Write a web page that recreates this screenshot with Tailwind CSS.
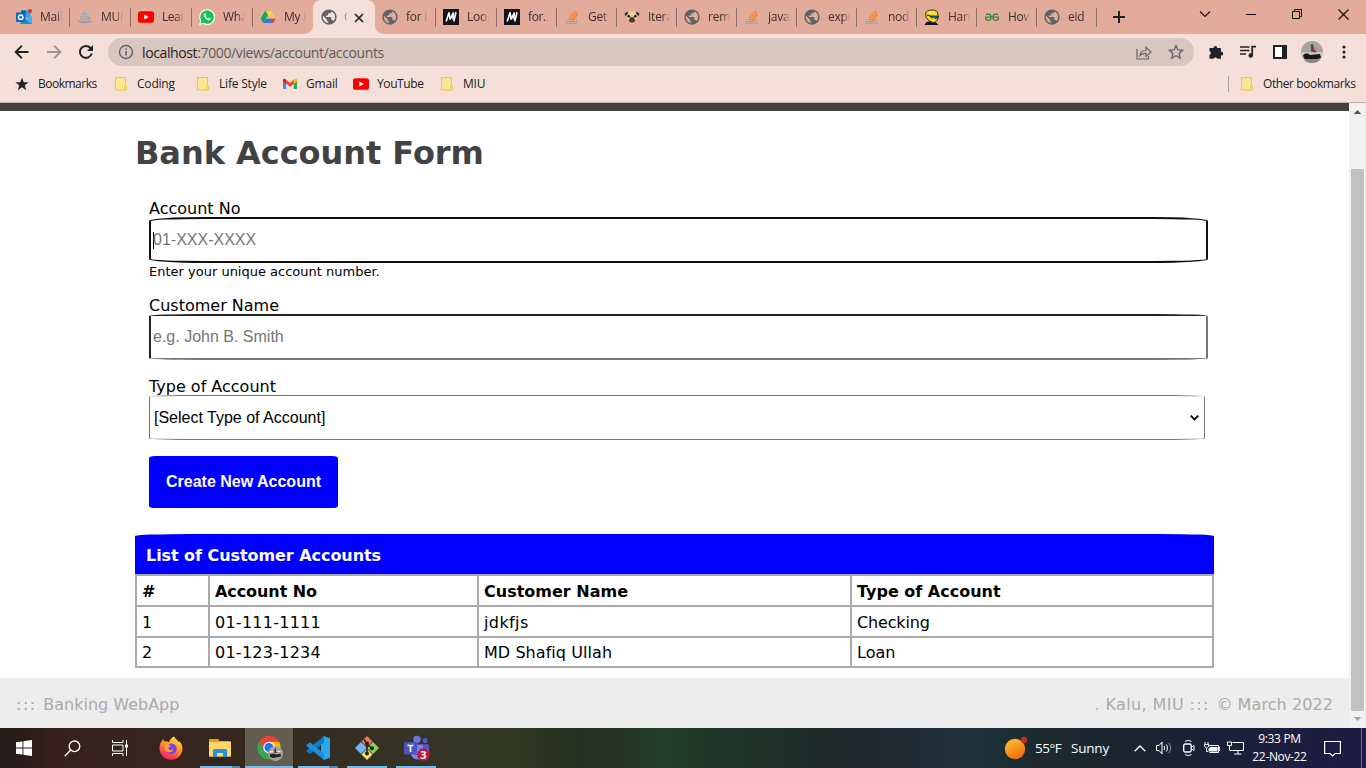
<!DOCTYPE html>
<html lang="en">
<head>
<meta charset="utf-8">
<title>Bank Account Form</title>
<script src="https://cdn.jsdelivr.net/npm/@tailwindcss/browser@4"></script>
</head>
<body class="w-[1366px] h-[768px] overflow-hidden bg-white flex flex-col font-['Open_Sans',sans-serif] text-[12px] text-[#202124]">
<svg class="hidden">
  <symbol id="globe" viewBox="1.500 1.500 21 21"><path d="M12 2C6.480 2 2 6.480 2 12s4.480 10 10 10 10-4.480 10-10S17.520 2 12 2zm-1 17.930c-3.950-.49-7-3.850-7-7.930 0-.62.080-1.210.210-1.790L9 15v1c0 1.100.9 2 2 2v1.930zm6.900-2.540c-.26-.81-1-1.390-1.900-1.390h-1v-3c0-.55-.45-1-1-1H8v-2h2c.55 0 1-.45 1-1V7h2c1.100 0 2-.9 2-2v-.41c2.930 1.190 5 4.060 5 7.410 0 2.080-.8 3.970-2.100 5.390z" fill="#5f6368"/></symbol>
  <symbol id="yt" viewBox="0 0 16 12"><rect width="16" height="11.500" y=".3" rx="2.600" fill="#f00"/><path d="M6.300 3.400v5.200L10.800 6z" fill="#fff"/></symbol>
  <symbol id="so" viewBox="0 0 16 16"><path d="M2.500 10v4.400h10V10" fill="none" stroke="#9fa6ad" stroke-width="1.200"/><path d="M4.300 12.500h6.500M4.400 10.200l6.400.7M5 7.700l6.200 1.900M6.400 5.200l5.500 3.100M8.500 3.200l4.400 4.500M11.200 1.700l2.500 5.200" stroke="#f48024" stroke-width="1.200" fill="none"/></symbol>
  <symbol id="mdn" viewBox="0 0 16 16"><path d="M0 0h16v16H0z" fill="#15141a"/><path d="M3.200 12.500L6 3.500l1.200 7L10.300 3.500l-.3 7M13 3.300l-2.200 9.200" fill="none" stroke="#fff" stroke-width="1.600" stroke-linejoin="bevel"/></symbol>
  <symbol id="folder" viewBox="0 0 13 14"><path d="M.5.500h10v9h1v3.500h-11z" fill="#ffe694" stroke="#e9c846"/><path d="M9.500 12.900V9.500h1.700" fill="none" stroke="#e9c846"/></symbol>
</svg>

<!-- Tab strip -->
<header class="h-[34px] shrink-0 bg-[#e2ab9a] flex text-[#3d2f2d] tracking-[-0.250px]">
  <div class="w-[8px]"></div>
  <div class="w-[62px] h-full flex items-center pl-[8px] relative after:absolute after:right-0 after:top-[8px] after:h-[19px] after:w-px after:bg-[#8d7069]">
    <svg class="size-4 shrink-0" viewBox="0 0 16 16"><path d="M5 1.500h9.500v7H5z" fill="#28a8ea"/><path d="M5 1.500h5v4H5z" fill="#0364b8"/><path d="M4.500 7.500l6 3.500L16 7.500V15H4.500z" fill="#1490df"/><path d="M16 7.500V15L9 10.500z" fill="#35b8f1"/><rect y="3.500" width="9.500" height="9.500" rx=".8" fill="#0f6cbd"/><circle cx="4.700" cy="8.200" r="2.200" fill="none" stroke="#fff" stroke-width="1.400"/><circle cx="14" cy="2" r="2" fill="#d13438"/></svg>
    <span class="ml-2 w-[22px] overflow-hidden whitespace-nowrap [mask-image:linear-gradient(to_right,black_80%,transparent)]">Mail</span>
  </div>
  <div class="w-[61px] h-full flex items-center pl-[7px] relative after:absolute after:right-0 after:top-[8px] after:h-[19px] after:w-px after:bg-[#8d7069]">
    <svg class="size-4 shrink-0" viewBox="0 0 16 16" fill="none" stroke="#7fa3cf"><path d="M7 1.500c2 1.500-1.500 2.500.5 4.500M9.500 3.500c1 1-1.200 1.500 0 3M5.500 4c.8.8-.6 1.500.3 2.500"/><path d="M3.500 8h8.300c0 1.700-1.300 2.700-4 2.700S3.500 9.700 3.500 8zM12 8.500c2.500-.5 2 2-.8 2"/><path d="M1 12c3 2.200 11 2.200 14 0-2 .8-12 .8-14 0z" fill="#7fa3cf"/></svg>
    <span class="ml-2 w-[22px] overflow-hidden whitespace-nowrap [mask-image:linear-gradient(to_right,black_65%,transparent)]">MUM</span>
  </div>
  <div class="w-[61px] h-full flex items-center pl-[7px] relative after:absolute after:right-0 after:top-[8px] after:h-[19px] after:w-px after:bg-[#8d7069]">
    <svg class="w-4 h-3 shrink-0"><use href="#yt"/></svg>
    <span class="ml-2 w-[22px] overflow-hidden whitespace-nowrap tracking-[-0.500px] [mask-image:linear-gradient(to_right,black_65%,transparent)]">Learn</span>
  </div>
  <div class="w-[61px] h-full flex items-center pl-[7px] relative after:absolute after:right-0 after:top-[8px] after:h-[19px] after:w-px after:bg-[#8d7069]">
    <svg class="size-4 shrink-0" viewBox="0 0 16 16"><path d="M0 16l1.200-4.200A7.900 7.900 0 1 1 4.300 15z" fill="#fff"/><path d="M1.400 14.600l.9-3.100a6.700 6.700 0 1 1 2.300 2.300z" fill="#14c54b"/><path d="M5.500 4.300c-1.300 1-1 2.900.8 4.900s3.900 3 5.300 1.500l.1-1-1.800-1-1 .9C7.800 9 7 8.200 6.700 7.200l.7-.9-.8-1.800z" fill="#fff"/></svg>
    <span class="ml-2 w-[22px] overflow-hidden whitespace-nowrap [mask-image:linear-gradient(to_right,black_65%,transparent)]">What</span>
  </div>
  <div class="w-[60px] h-full flex items-center pl-[7px]">
    <svg class="size-4 shrink-0" viewBox="0 0 16 16"><path d="M5.300 1.500h5.200L8 6.200 3.300 14 .7 9.700z" fill="#11a861"/><path d="M5.300 1.500h5.200l5 8.200h-5.300z" fill="#ffcf48"/><path d="M5.800 9.700h9.700L13 14H3.300z" fill="#3777e3"/><path d="M10.200 9.700h5.300L13 14z" fill="#ea4335"/></svg>
    <span class="ml-2 w-[22px] overflow-hidden whitespace-nowrap [mask-image:linear-gradient(to_right,black_65%,transparent)]">My Drive</span>
  </div>
  <!-- Active tab -->
  <div class="w-[62px] h-full flex items-center pl-[8px] bg-[#f5e0d9] rounded-t-[8px] relative before:absolute before:-left-2 before:bottom-0 before:size-2 before:bg-[radial-gradient(circle_at_0_0,transparent_7.500px,#f5e0d9_8px)] after:absolute after:-right-2 after:bottom-0 after:size-2 after:bg-[radial-gradient(circle_at_100%_0,transparent_7.500px,#f5e0d9_8px)]">
    <svg class="size-4 shrink-0"><use href="#globe"/></svg>
    <span class="ml-[7px] w-[4px] overflow-hidden whitespace-nowrap text-[#3a57a0] [mask-image:linear-gradient(to_right,black,transparent)]">Create</span>
    <svg class="size-[10px] ml-[6px] mt-px shrink-0" viewBox="0 0 10 10"><path d="M1 1l8 8M9 1l-8 8" stroke="#202124" stroke-width="1.700"/></svg>
  </div>
  <div class="w-[61px] h-full flex items-center pl-[7px] relative after:absolute after:right-0 after:top-[8px] after:h-[19px] after:w-px after:bg-[#8d7069]">
    <svg class="size-4 shrink-0"><use href="#globe"/></svg>
    <span class="ml-2 w-[22px] overflow-hidden whitespace-nowrap [mask-image:linear-gradient(to_right,black_65%,transparent)]">for in</span>
  </div>
  <div class="w-[61px] h-full flex items-center pl-[7px] relative after:absolute after:right-0 after:top-[8px] after:h-[19px] after:w-px after:bg-[#8d7069]">
    <svg class="size-4 shrink-0"><use href="#mdn"/></svg>
    <span class="ml-2 w-[22px] overflow-hidden whitespace-nowrap [mask-image:linear-gradient(to_right,black_65%,transparent)]">Loops</span>
  </div>
  <div class="w-[60px] h-full flex items-center pl-[7px] relative after:absolute after:right-0 after:top-[8px] after:h-[19px] after:w-px after:bg-[#8d7069]">
    <svg class="size-4 shrink-0"><use href="#mdn"/></svg>
    <span class="ml-2 w-[21px] overflow-hidden whitespace-nowrap tracking-[-0.400px] [mask-image:linear-gradient(to_right,black_75%,transparent)]">for...in</span>
  </div>
  <div class="w-[60px] h-full flex items-center pl-[7px] relative after:absolute after:right-0 after:top-[8px] after:h-[19px] after:w-px after:bg-[#8d7069]">
    <svg class="size-4 shrink-0"><use href="#so"/></svg>
    <span class="ml-2 w-[22px] overflow-hidden whitespace-nowrap [mask-image:linear-gradient(to_right,black_65%,transparent)]">Get</span>
  </div>
  <div class="w-[60px] h-full flex items-center pl-[7px] relative after:absolute after:right-0 after:top-[8px] after:h-[19px] after:w-px after:bg-[#8d7069]">
    <svg class="size-4 shrink-0" viewBox="0 0 16 16"><path d="M3 3.500C5 2 11 2 13 3.500c1 3 .3 6-.8 8L8 13.500l-4.200-2C2.600 9.500 2 6.500 3 3.500z" fill="#e8cf9f"/><path d="M3.500 2.500L.5 4.500 1.500 7 4 5zM12.500 2.500l3 2-1 2.500L12 5z" fill="#2e211c"/><path d="M6 8.500h4l1.500 3.500L8 14l-3.500-2z" fill="#5b3a2b"/><circle cx="4.800" cy="7.300" r="1.300" fill="#1a1210"/><circle cx="11.200" cy="7.300" r="1.300" fill="#1a1210"/><path d="M6.700 8.500h2.600L8 10z" fill="#111"/></svg>
    <span class="ml-2 w-[22px] overflow-hidden whitespace-nowrap [mask-image:linear-gradient(to_right,black_65%,transparent)]">Iterate</span>
  </div>
  <div class="w-[60px] h-full flex items-center pl-[7px] relative after:absolute after:right-0 after:top-[8px] after:h-[19px] after:w-px after:bg-[#8d7069]">
    <svg class="size-4 shrink-0"><use href="#globe"/></svg>
    <span class="ml-2 w-[22px] overflow-hidden whitespace-nowrap [mask-image:linear-gradient(to_right,black_65%,transparent)]">remo</span>
  </div>
  <div class="w-[60px] h-full flex items-center pl-[7px] relative after:absolute after:right-0 after:top-[8px] after:h-[19px] after:w-px after:bg-[#8d7069]">
    <svg class="size-4 shrink-0"><use href="#so"/></svg>
    <span class="ml-2 w-[22px] overflow-hidden whitespace-nowrap [mask-image:linear-gradient(to_right,black_65%,transparent)]">javas</span>
  </div>
  <div class="w-[60px] h-full flex items-center pl-[7px] relative after:absolute after:right-0 after:top-[8px] after:h-[19px] after:w-px after:bg-[#8d7069]">
    <svg class="size-4 shrink-0"><use href="#globe"/></svg>
    <span class="ml-2 w-[22px] overflow-hidden whitespace-nowrap [mask-image:linear-gradient(to_right,black_65%,transparent)]">expre</span>
  </div>
  <div class="w-[60px] h-full flex items-center pl-[7px] relative after:absolute after:right-0 after:top-[8px] after:h-[19px] after:w-px after:bg-[#8d7069]">
    <svg class="size-4 shrink-0"><use href="#so"/></svg>
    <span class="ml-2 w-[22px] overflow-hidden whitespace-nowrap [mask-image:linear-gradient(to_right,black_65%,transparent)]">node</span>
  </div>
  <div class="w-[60px] h-full flex items-center pl-[7px] relative after:absolute after:right-0 after:top-[8px] after:h-[19px] after:w-px after:bg-[#8d7069]">
    <svg class="size-4 shrink-0" viewBox="0 0 16 16"><path d="M1.500 4C3 .5 11 0 13.500 3l.8 5c-.3 3-2 5-5 5.500L5 12 2 8z" fill="#f6dc1b" stroke="#1a1a1a" stroke-width=".9"/><path d="M6 7h8l-.5 2.200-2.500.3L9.500 8.300 7.500 9z" fill="#1478b8" stroke="#111" stroke-width=".7"/><path d="M3 6l4 1.300" stroke="#111"/><path d="M.5 16l2-3 4-.5 2 1.500 3-1 3 3z" fill="#15151f"/><path d="M5 3.500l6-1" stroke="#fff59a"/></svg>
    <span class="ml-2 w-[22px] overflow-hidden whitespace-nowrap [mask-image:linear-gradient(to_right,black_65%,transparent)]">Hand</span>
  </div>
  <div class="w-[60px] h-full flex items-center pl-[7px] relative after:absolute after:right-0 after:top-[8px] after:h-[19px] after:w-px after:bg-[#8d7069]">
    <svg class="size-4 shrink-0" viewBox="0 0 16 16" fill="none" stroke="#2f8d46" stroke-width="1.300"><path d="M2 5.800C4 4.300 7 5 7 8c0 2.200-1.300 3.300-3 3.300S1.500 10 1.500 8.300M14 5.800C12 4.300 9 5 9 8c0 2.200 1.300 3.300 3 3.300s2.500-1.300 2.500-3M.8 8.200h14.400"/></svg>
    <span class="ml-2 w-[22px] overflow-hidden whitespace-nowrap [mask-image:linear-gradient(to_right,black_65%,transparent)]">How</span>
  </div>
  <div class="w-[60px] h-full flex items-center pl-[7px] relative after:absolute after:right-0 after:top-[8px] after:h-[19px] after:w-px after:bg-[#8d7069]">
    <svg class="size-4 shrink-0"><use href="#globe"/></svg>
    <span class="ml-2 w-[20px] overflow-hidden whitespace-nowrap [mask-image:linear-gradient(to_right,black_75%,transparent)]">eid m</span>
  </div>
  <div class="flex items-center pl-[15px] w-[102px]"><svg class="size-[14px]" viewBox="0 0 14 14"><path d="M7 1v12M1 7h12" stroke="#202124" stroke-width="2"/></svg></div>
  <div class="flex items-start pt-[9px] gap-[35px]">
    <svg class="w-[12px] h-[11px]" viewBox="0 0 12 11"><path d="M1 2.500l5 5 5-5" fill="none" stroke="#111" stroke-width="1.100"/></svg>
    <svg class="w-[10px] h-[11px]" viewBox="0 0 10 11"><path d="M0 5.500h10" stroke="#111"/></svg>
    <svg class="w-[10px] h-[10px] ml-px" viewBox="0 0 10 10"><path d="M.5 2.500h7v7h-7zM2.500 2.500v-2h7v7h-2" fill="none" stroke="#111"/></svg>
    <svg class="w-[11px] h-[11px] ml-px" viewBox="0 0 11 11"><path d="M.5.500l10 10M10.500.500l-10 10" stroke="#111" stroke-width="1.100"/></svg>
  </div>
</header>

<!-- Address bar -->
<div class="h-[36px] shrink-0 bg-[#f5e0d9] flex items-center">
  <svg class="w-4 h-4 ml-[14px]" viewBox="0 0 16 16"><path d="M14.500 8H2M8 1.700L1.700 8 8 14.300" fill="none" stroke="#202124" stroke-width="1.900"/></svg>
  <svg class="w-4 h-4 ml-[16px]" viewBox="0 0 16 16"><path d="M1 8h13M8 1.700L14.300 8 8 14.300" fill="none" stroke="#a3928f" stroke-width="1.900"/></svg>
  <svg class="w-4 h-4 ml-[16px]" viewBox="0 0 16 16"><path d="M13.700 9.500A6 6 0 1 1 12.500 4" fill="none" stroke="#202124" stroke-width="2"/><path d="M15 1v6H9z" fill="#202124"/></svg>
  <div class="ml-[14px] w-[1086px] h-[28px] rounded-full bg-[#d8c6bf] flex items-center text-[14px] text-[#5f5a59]">
    <svg class="size-[16px] ml-[10px]" viewBox="0 0 16 16"><circle cx="8" cy="8" r="6.500" fill="none" stroke="#5f6368" stroke-width="1.400"/><path d="M8 7v4.500M8 4.300v1.500" stroke="#5f6368" stroke-width="1.600"/></svg>
    <span class="ml-[8px] tracking-[-0.380px] flex-1"><span class="text-[#202124]">localhost</span>:7000/views/account/accounts</span>
    <svg class="w-4 h-[15px] mr-[16px]" viewBox="0 0 16 15"><path d="M1 4v10h11.500v-3" fill="none" stroke="#6b6564" stroke-width="1.200"/><path d="M4 10.500c.5-3.500 3-5 6-5V2.300L15 7l-5 4.500V8.300c-3 0-4.500.5-6 2.200z" fill="none" stroke="#6b6564" stroke-width="1.200"/></svg>
    <svg class="w-4 h-4 mr-[10px]" viewBox="0 0 16 16"><path d="M8 1.500l1.900 4.400 4.800.4-3.600 3.200 1.100 4.700L8 11.700l-4.200 2.500 1.100-4.700L1.300 6.300l4.800-.4z" fill="none" stroke="#5f6368" stroke-width="1.300"/></svg>
  </div>
  <svg class="w-4 h-4 ml-[14px]" viewBox="0 0 16 16"><path d="M1.500 4h4a1.900 1.900 0 1 1 3.800 0h3.600v3.800a1.900 1.900 0 1 1 0 3.700v3.300H9.300a2 2 0 0 0-3.800 0h-4v-3.800a2 2 0 0 0 0-3.800z" fill="#202124"/></svg>
  <svg class="w-[17px] h-4 ml-[15px]" viewBox="0 0 17 16"><path d="M1 3h9.500M1 6.500h9.500M1 10h6M13.200 11.500V2.700H17" fill="none" stroke="#202124" stroke-width="1.700"/><circle cx="11.700" cy="11.500" r="2.200" fill="#202124"/></svg>
  <svg class="w-[14px] h-[14px] ml-[17px]" viewBox="0 0 14 14"><path d="M1 1h12v12H1z" fill="#fff" stroke="#202124" stroke-width="2"/><path d="M9 1h4v12H9z" fill="#202124"/></svg>
  <svg class="w-[22px] h-[22px] ml-[14px]" viewBox="0 0 22 22"><defs><clipPath id="av"><circle cx="11" cy="11" r="11"/></clipPath></defs><g clip-path="url(#av)"><path d="M0 0h22v22H0z" fill="#a5a59e"/><path d="M0 11h22v4H0z" fill="#c9c5c1"/><path d="M2 14.500l2-2h3l2 1.500 10-1 1 4-6 1.500H4z" fill="#171717"/><path d="M10 5h2.500l1 4 2.500 1.500-2 1-4-1z" fill="#8c3440"/><circle cx="11" cy="4.500" r="1.300" fill="#444"/><path d="M0 18h22v4H0z" fill="#8a8580"/></g></svg>
  <svg class="w-[4px] h-[14px] ml-[19px]" viewBox="0 0 4 14"><circle cx="2" cy="2" r="1.600" fill="#202124"/><circle cx="2" cy="7" r="1.600" fill="#202124"/><circle cx="2" cy="12" r="1.600" fill="#202124"/></svg>
</div>

<!-- Bookmarks bar -->
<nav class="h-[33px] shrink-0 bg-[#f5e0d9] border-b border-[#c2b0ab] flex items-center pb-[5px] pl-[15px] whitespace-nowrap tracking-[-0.200px]">
  <div class="w-[100px] flex items-center tracking-[-0.500px]"><svg class="size-[14px] mr-[9px]" viewBox="0 0 14 14"><path d="M7 .5l1.700 4.700 5 .1-4 3 1.500 4.900L7 10.300l-4.200 2.900 1.500-4.900-4-3 5-.1z" fill="#202124"/></svg>Bookmarks</div>
  <div class="w-[82px] flex items-center"><svg class="w-[13px] h-[14px] mr-[9px]"><use href="#folder"/></svg>Coding</div>
  <div class="w-[86px] flex items-center"><svg class="w-[13px] h-[14px] mr-[9px]"><use href="#folder"/></svg>Life Style</div>
  <div class="w-[70px] flex items-center"><svg class="w-[14px] h-[11px] mr-[9px]" viewBox="0 0 14 11"><path d="M0 1.500V11h3.200V5z" fill="#4285f4"/><path d="M14 1.500V11h-3.200V5z" fill="#34a853"/><path d="M3.200 1.800v4L7 8.700l3.800-2.900v-4L7 4.700z" fill="#ea4335"/><path d="M0 1.800v1.600l3.200 2.400v-4C1.500.2 0 .6 0 1.800z" fill="#c5221f"/><path d="M14 1.800v1.600l-3.200 2.400v-4C12.500.2 14 .6 14 1.800z" fill="#fbbc04"/></svg>Gmail</div>
  <div class="w-[88px] flex items-center tracking-[-0.400px]"><svg class="w-[16px] h-[12px] mr-[8px]"><use href="#yt"/></svg>YouTube</div>
  <div class="flex items-center"><svg class="w-[13px] h-[14px] mr-[9px]"><use href="#folder"/></svg>MIU</div>
  <div class="ml-auto w-[138px] flex items-center tracking-[-0.400px]"><span class="w-px h-4 bg-[#b5a5a0] mr-[12px]"></span><svg class="w-[13px] h-[14px] mr-[9px]"><use href="#folder"/></svg>Other bookmarks</div>
</nav>

<!-- Viewport -->
<div class="h-[625px] shrink-0 flex">
  <main class="w-[1349px] flex flex-col bg-white font-['DejaVu_Sans',Verdana,sans-serif] text-[16px] text-black">
    <div class="h-[8px] bg-[#424242]"></div>
    <div class="h-[567px] pl-[135px]">
      <h1 class="h-[88px] pt-[21px] leading-[42px] text-[32px] font-bold text-[#424242] tracking-[-0.040px]">Bank Account Form</h1>
      <form class="pl-[14px] w-[1079px]">
        <label class="block h-[18px] pt-px leading-[18px]">Account No</label>
        <div class="w-[1059px] h-[46px] border-2 border-[#101010] rounded-[55px/4px] flex items-center pl-[2px] font-['Liberation_Sans',Arial,sans-serif] text-[#757575]"><span class="w-px h-[17px] bg-black -mr-px"></span>01-XXX-XXXX</div>
        <p class="h-[33px] pt-px leading-[16px] text-[13px]">Enter your unique account number.</p>
        <label class="block h-[18px] pt-px leading-[18px]">Customer Name</label>
        <div class="w-[1059px] h-[46px] border-2 border-t-[#222] border-l-[#222] border-r-[#767676] border-b-[#767676] rounded-[53px/2px] flex items-center pl-[2px] font-['Liberation_Sans',Arial,sans-serif] text-[#757575]">e.g. John B. Smith</div>
        <label class="block h-[35px] pt-[18px] leading-[18px]">Type of Account</label>
        <div class="w-[1056px] h-[45px] border border-[#767676] rounded-[52px/1.5px] flex items-center justify-between pl-[4px] pr-[5px] font-['Liberation_Sans',Arial,sans-serif]">[Select Type of Account]<svg class="w-[9px] h-[6px]" viewBox="0 0 9 6"><path d="M.7.700l3.800 3.800L8.300.700" fill="none" stroke="#000" stroke-width="1.900"/></svg></div>
        <button type="button" class="mt-[16px] w-[189px] h-[52px] rounded-[6px/2px] bg-[#0000ff] text-white font-bold font-['Liberation_Sans',Arial,sans-serif] whitespace-nowrap">Create New Account</button>
      </form>
      <h2 class="mt-[26px] w-[1079px] h-[40px] bg-[#0000ff] [border-radius:54px_54px_0_0/2px_2px_0_0] text-white font-bold leading-[43px] pl-[11px] tracking-[-0.060px]">List of Customer Accounts</h2>
      <div class="w-[1079px] grid grid-cols-[71px_267px_371px_360px] grid-rows-[29px_29px_28px] gap-[2px] p-[2px] bg-[#aaaaaa] *:bg-white *:pl-[5px]">
        <div class="font-bold leading-[31px]">#</div><div class="font-bold leading-[31px] tracking-[-0.080px]">Account No</div><div class="font-bold leading-[31px]">Customer Name</div><div class="font-bold leading-[31px]">Type of Account</div>
        <div class="leading-[31px]">1</div><div class="leading-[31px] tracking-[0.250px]">01-111-1111</div><div class="leading-[31px] tracking-[0.400px]">jdkfjs</div><div class="leading-[31px] tracking-[-0.150px]">Checking</div>
        <div class="leading-[29px]">2</div><div class="leading-[29px] tracking-[0.250px]">01-123-1234</div><div class="leading-[29px] tracking-[0.060px]">MD Shafiq Ullah</div><div class="leading-[29px]">Loan</div>
      </div>
    </div>
    <footer class="h-[50px] bg-[#ededed] text-[#aaaaaa] flex items-center justify-between pl-[16px] pr-[16px] pt-[4px]"><span><span class="tracking-[1.500px]">::: </span>Banking WebApp</span><span><span class="tracking-[0.400px]">. Kalu, MIU </span><span class="tracking-[1.400px]">::: </span><span class="tracking-[0.080px]">© March 2022</span></span></footer>
  </main>
  <!-- Scrollbar -->
  <div class="w-[17px] bg-[#f1f1f1] flex flex-col items-center">
    <svg class="w-[9px] h-[17px]" viewBox="0 0 9 17"><path d="M.7 11L4.500 7l3.800 4z" fill="#505050"/></svg>
    <div class="mt-[49px] w-[13px] h-[542px] bg-[#c1c1c1]"></div>
    <svg class="w-[9px] h-[17px]" viewBox="0 0 9 17"><path d="M.7 6L4.500 10l3.800-4z" fill="#a3a3a3"/></svg>
  </div>
</div>

<!-- Taskbar -->
<div class="h-[40px] shrink-0 flex text-white bg-[linear-gradient(to_right,#241a1a_0px,#38211c_60px,#34281f_250px,#353526_440px,#333a24_500px,#252f1e_580px,#223d28_665px,#1f3329_730px,#1d2a28_830px,#1f272f_860px,#1f303a_970px,#1c2a2e_1040px,#1a2236_1200px,#1f1b45_1366px)]">
  <div class="w-[48px] flex items-center justify-center"><svg class="size-4" viewBox="0 0 16 16"><path d="M0 2.300L6.500 1.400v6.100H0zM7.400 1.300L16 0v7.500H7.400zM0 8.400h6.500v6.200L0 13.700zM7.400 8.400H16V16l-8.600-1.300z" fill="#fff"/></svg></div>
  <div class="w-[48px] flex items-center justify-center"><svg class="size-[17px]" viewBox="0 0 17 17"><circle cx="10.500" cy="6.300" r="5.300" fill="none" stroke="#fff" stroke-width="1.300"/><path d="M6.700 10L.8 16.200" stroke="#fff" stroke-width="1.300"/></svg></div>
  <div class="w-[50px] flex items-center justify-center pr-[2px]"><svg class="w-[17px] h-[16px]" viewBox="0 0 17 16"><path d="M.5 0v2.500h10.500V0M.5 16v-2.500h10.500V16M.5 5h10.500v6H.5zM14.500 0v16" fill="none" stroke="#fff"/><path d="M13 4.500h3v3h-3z" fill="#fff"/></svg></div>
  <div class="w-[49px] flex items-center justify-center"><svg class="size-[24px]" viewBox="0 0 24 24"><defs><linearGradient id="ff" x1=".8" y1="0" x2=".3" y2="1"><stop offset="0" stop-color="#fff44f"/><stop offset=".45" stop-color="#ff9123"/><stop offset="1" stop-color="#f5156c"/></linearGradient></defs><path d="M15 .5c1 2 3.500 3.500 4.500 5.500l.8-.8C22.500 7.500 23.500 10 23.500 12.500A11.500 11.300 0 0 1 .5 12.500C.5 9 1.500 6.500 3 4.800L4 3l1.500 2.500c2-.5 3.500 0 4.500.8C10.500 4 12.500 1.500 15 .5z" fill="url(#ff)"/><circle cx="12.300" cy="12.800" r="5.300" fill="#7a3ff0"/><path d="M7 8c2 .5 3.500 0 5 2l-2.500 1.500c-.5 2.500 2.500 3.500 5 1.500-1 4-7 4.500-9 .5C4.800 11.500 5.500 9 7 8z" fill="#ffa12a"/></svg></div>
  <div class="w-[50px] flex items-center justify-center relative pr-px"><svg class="w-[22px] h-[18px]" viewBox="0 0 22 18"><path d="M0 0h9l1.500 2H21a1 1 0 0 1 1 1v14.500H0z" fill="#e6a414"/><path d="M1 3h21v14.500H0V3z" fill="#fdd868"/><path d="M4 18v-6.500A1.500 1.500 0 0 1 5.500 10h11a1.500 1.500 0 0 1 1.500 1.500V18h-4v-4H8v4z" fill="#2c8fdd"/></svg><span class="absolute bottom-0 left-[5px] w-[32px] h-[2px] bg-[#76b9ed]"></span><span class="absolute bottom-0 left-[37px] w-[8px] h-[2px] bg-[#5586ab]"></span></div>
  <div class="w-[48px] flex items-center justify-center relative bg-[#615d4f] pl-[2px]"><svg class="size-[26px]" viewBox="0 0 26 26"><path d="M12 1a11.500 11.500 0 0 1 10 5.800H12z" fill="#ea4335"/><path d="M2 6.800A11.500 11.500 0 0 1 22 6.800H12.500L7 15z" fill="#ea4335"/><path d="M22 6.800A11.500 11.500 0 0 1 12 24l5-9.500-5-7.700z" fill="#fbbc05"/><path d="M2 6.800A11.500 11.500 0 0 0 12 24.200l4-7.500-8.500-1z" fill="#34a853"/><circle cx="12" cy="12.500" r="5.700" fill="#fff"/><circle cx="12" cy="12.500" r="4.500" fill="#1a73e8"/><circle cx="18.500" cy="18.500" r="7.500" fill="#a7a29e"/><path d="M13 19l3-.5 3 1 4.500-.7.500 2.700-8 1.500-3-1z" fill="#292423"/><path d="M13 16h3v1.500h-3zM20.500 16h3v1h-3z" fill="#eee"/><path d="M17.500 13.500h1.500v4l2 .5h-3.500z" fill="#4a2528"/></svg><span class="absolute bottom-0 left-0 w-[48px] h-[2px] bg-[#76b9ed]"></span></div>
  <div class="w-[49px] flex items-center justify-center relative pl-px"><svg class="size-[24px]" viewBox="0 0 24 24"><path d="M18 0l6 2.500v19L18 24l-3-3V3z" fill="#2aa7f2"/><path d="M18 0v6.500L4 18 .5 15.500v-1.300z" fill="#0a7dcc"/><path d="M18 24v-6.500L4 6.500.5 8.700V10z" fill="#1b8fdd"/></svg><span class="absolute bottom-0 left-[5px] w-[31px] h-[2px] bg-[#76b9ed]"></span><span class="absolute bottom-0 left-[36px] w-[9px] h-[2px] bg-[#5586ab]"></span></div>
  <div class="w-[49px] flex items-center justify-center relative"><svg class="size-[24px]" viewBox="0 0 24 24"><path d="M12 0l5.500 5.500L12 11 6.500 5.500z" fill="#f0716a"/><path d="M18 6l6 6-6 6-6-6z" fill="#8bd14f"/><path d="M6 6l6 6-6 6-6-6z" fill="#70b5f5"/><path d="M12 13l5.500 5.500L12 24l-5.500-5.500z" fill="#fbe06c"/><path d="M9 3.500l3 4v11M12 8.500l5 4" stroke="#222" stroke-width="1.500" fill="none"/><circle cx="12" cy="7.500" r="2" fill="#222"/><circle cx="17" cy="12.300" r="2" fill="#222"/><circle cx="12" cy="17.500" r="2" fill="#222"/></svg><span class="absolute bottom-0 left-[5px] w-[40px] h-[2px] bg-[#76b9ed]"></span></div>
  <div class="w-[49px] flex items-center justify-center relative"><svg class="w-[26px] h-[26px] ml-[2px]" viewBox="0 0 26 26"><circle cx="13" cy="4.500" r="3.700" fill="#6a73dd"/><circle cx="21" cy="5.500" r="2.600" fill="#5059c9"/><path d="M17 9.500h8V16a4 4 0 0 1-8 2z" fill="#5059c9"/><path d="M7 9.500h12V18a6 6 0 0 1-12 1z" fill="#7b83eb"/><rect y="7" width="13" height="12.500" rx="1" fill="#4b53bc"/><path d="M3.500 10.500h6M6.500 10.500v6.500" stroke="#fff" stroke-width="1.700"/><circle cx="19.500" cy="19.500" r="6.300" fill="#c4173a"/><text x="19.500" y="23.700" text-anchor="middle" font-family="Open Sans" font-weight="700" font-size="11" fill="#fff">3</text></svg><span class="absolute bottom-0 left-[5px] w-[40px] h-[2px] bg-[#76b9ed]"></span></div>
  <div class="flex items-center ml-auto text-[13.500px] whitespace-nowrap">
    <svg class="w-[24px] h-[24px]" viewBox="0 0 24 24"><defs><linearGradient id="sun" x1=".2" y1="0" x2=".7" y2="1"><stop offset="0" stop-color="#fbc02d"/><stop offset="1" stop-color="#f26a0a"/></linearGradient></defs><circle cx="11" cy="13" r="10.200" fill="url(#sun)"/><circle cx="20" cy="4" r="3.200" fill="#c42b1c"/></svg>
    <span class="ml-[7px] w-[36px] tracking-[-0.500px]">55°F</span><span class="w-[63px] tracking-[-0.200px]">Sunny</span>
    <svg class="w-[12px] h-[7px]" viewBox="0 0 12 7"><path d="M.7 6.300L6 1l5.300 5.300" fill="none" stroke="#fff" stroke-width="1.300"/></svg>
    <svg class="w-[17px] h-[14px] ml-[10px]" viewBox="0 0 17 14" fill="none" stroke="#fff"><path d="M.5 4.500h2.500l3-3.500v12l-3-3.500H.5zM8 5c.8 1.200.8 2.800 0 4M10.300 3.500c1.600 2 1.600 5 0 7"/><path d="M12.800 2c2.300 3 2.300 7 0 10" stroke="#8c959c"/></svg>
    <svg class="w-[12px] h-[16px] ml-[10px]" viewBox="0 0 12 16" fill="none" stroke="#fff"><rect x=".7" y="4" width="7.500" height="8" rx="1.500" stroke-width="1.300"/><path d="M8.500 7L11 5.500v5L8.500 9M2 1.500c2-1.300 4.500-1.300 6.500 0M2 14.500c2 1.300 4.500 1.300 6.500 0"/></svg>
    <svg class="w-[16px] h-[12px] ml-[9px]" viewBox="0 0 16 12"><path d="M4.500 3.500h10v7h-9" fill="none" stroke="#fff"/><path d="M6 5h7.500v4.500H4.500V7z" fill="#fff"/><path d="M15 5.500h1v3h-1zM1 0v2.500M4 0v2.500M.5 2.500h4v2l-2 1.500-2-1.500zM2.500 6v3.500H4" stroke="#fff" fill="none"/></svg>
    <svg class="w-[17px] h-[14px] ml-[7px]" viewBox="0 0 17 14" fill="none" stroke="#fff"><path d="M5.500 1.500h11v8h-11M11 9.500v3.500M7 13h7.500M.5 1h4v3.500h-4zM2.500 4.500V9.500h3"/></svg>
    <div class="w-[71px] text-center text-[12px] leading-[18px] tracking-[-0.350px]"><div>9:33 PM</div><div>22-Nov-22</div></div>
    <svg class="w-[17px] h-[17px] ml-[9px] mr-[20px]" viewBox="0 0 17 17"><path d="M.6 1.500h15.800v12H11l-2.500 2.500L6 13.500H.6z" fill="none" stroke="#fff" stroke-width="1.200"/></svg>
    <span class="w-px h-[40px] bg-[#6d6d85] mr-[4px]"></span>
  </div>
</div>
</body>
</html>
